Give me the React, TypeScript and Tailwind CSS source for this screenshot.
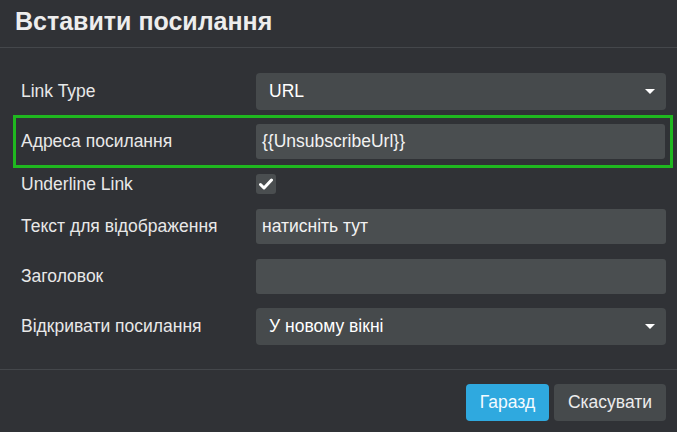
import React from "react";

const font = { fontFamily: '"Liberation Sans", Arial, sans-serif' };

function Caret() {
  return (
    <svg width="10" height="5" viewBox="0 0 10 5" className="shrink-0">
      <path d="M0 0 L10 0 L5 5 Z" fill="#ffffff" />
    </svg>
  );
}

function Select({ value }: { value: string }) {
  return (
    <div className="flex-1 h-[37px] rounded-[4px] bg-[#464a4c] flex items-center justify-between pl-[13px] pr-[11px] text-[17.5px] text-white">
      <span>{value}</span>
      <Caret />
    </div>
  );
}

function Input({ value }: { value?: string }) {
  return (
    <div className="flex-1 h-[35px] rounded-[3px] bg-[#4a4e50] flex items-center px-[6px] text-[17.5px] text-[#f2f2f2]">
      {value}
    </div>
  );
}

function Label({ children }: { children: React.ReactNode }) {
  return <div className="w-[235px] shrink-0 text-[17.5px] text-[#e8e8e8]">{children}</div>;
}

export default function App() {
  return (
    <div className="w-[677px] h-[432px] bg-[#303236] flex flex-col overflow-hidden" style={font}>
      <div className="h-[48px] border-b border-[#44474b] flex items-center pl-[15px]">
        <h1 className="text-[25px] font-bold text-[#ededed] leading-none pb-[4px]">Вставити посилання</h1>
      </div>

      <div className="mt-[25px] flex items-center pl-[21px] pr-[11px]">
        <Label>Link Type</Label>
        <Select value="URL" />
      </div>

      <div className="mt-[5px] ml-[13px] mr-[4px] border-[3px] border-[#1fb81f] flex items-center py-[6px] pl-[5px] pr-[5px]">
        <Label>Адреса посилання</Label>
        <Input value="{{UnsubscribeUrl}}" />
      </div>

      <div className="mt-[6px] h-[20px] flex items-center pl-[21px] pr-[11px]">
        <Label>Underline Link</Label>
        <div className="w-[20px] h-[20px] rounded-[3px] bg-[#4a4e50] flex items-center justify-center">
          <svg width="14" height="12" viewBox="0 0 14 12">
            <path d="M1.5 6.5 L5 10 L12.5 2" fill="none" stroke="#ffffff" strokeWidth="3" strokeLinecap="round" strokeLinejoin="round" />
          </svg>
        </div>
      </div>

      <div className="mt-[15px] flex items-center pl-[21px] pr-[11px]">
        <Label>Текст для відображення</Label>
        <Input value="натисніть тут" />
      </div>

      <div className="mt-[15px] flex items-center pl-[21px] pr-[11px]">
        <Label>Заголовок</Label>
        <Input />
      </div>

      <div className="mt-[14px] flex items-center pl-[21px] pr-[11px]">
        <Label>Відкривати посилання</Label>
        <Select value="У новому вікні" />
      </div>

      <div className="mt-[24px] border-t border-[#44474b] flex justify-end gap-[5px] pt-[14px] pr-[11px]">
        <button className="h-[37px] w-[83px] rounded-[4px] bg-[#2fa9df] text-[17.5px] text-[#f4fbff]">Гаразд</button>
        <button className="h-[37px] w-[112px] rounded-[4px] bg-[#464a4c] text-[17.5px] text-[#ececec]">Скасувати</button>
      </div>
    </div>
  );
}
